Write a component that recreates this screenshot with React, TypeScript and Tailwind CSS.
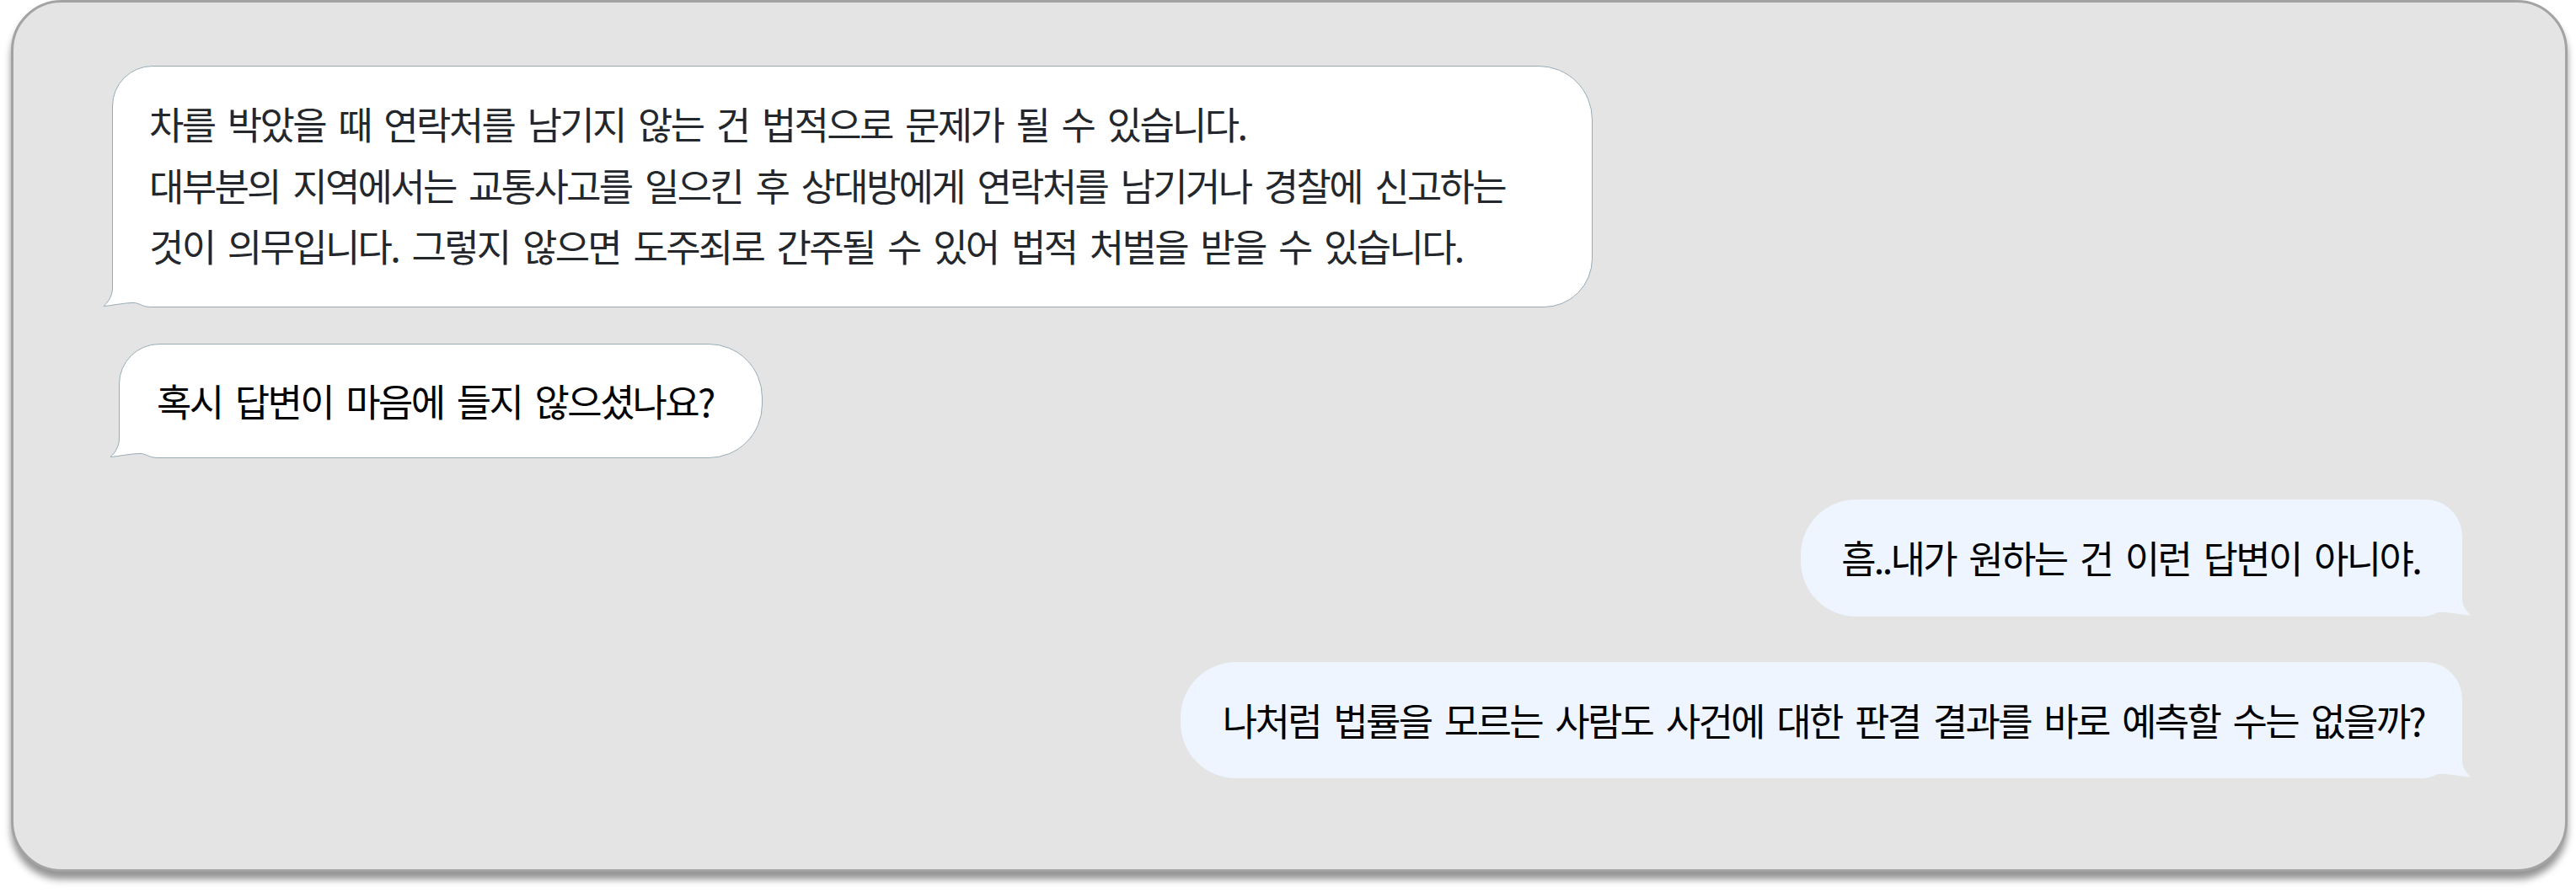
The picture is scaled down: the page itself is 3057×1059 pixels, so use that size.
import React from 'react'

const BG = '#e4e4e4'

function Tail({ side, fill, stroke }: { side: 'left' | 'right'; fill: string; stroke?: string }) {
  const edge = 'M12.5 16 C12.5 26 8 33 2 38.5 C12 37.8 26 34.6 37 34.4 C44 34.4 48 39.5 58 39.5'
  const pos = side === 'left'
    ? stroke ? 'left-[-13px] bottom-[-1px]' : 'left-[-12px] bottom-0'
    : 'right-[-12px] bottom-0 -scale-x-100'
  return (
    <svg className={`absolute ${pos} overflow-visible`} width="72" height="40" viewBox="0 0 72 40">
      <path d={`M2 38.5 C12 37.8 26 34.6 37 34.4 C44 34.4 48 39.5 58 39.5 L58 42 L0 42 L0 38.5 Z`} fill={BG} />
      <path d={`${edge} L72 39.5 L72 16 Z`} fill={fill} />
      {stroke && <path d={`${edge} L72 39.5`} fill="none" stroke={stroke} strokeWidth="1" />}
    </svg>
  )
}

const textStyle = "font-['Noto_Sans_CJK_KR',sans-serif] text-[45px] leading-[72.5px] tracking-[-0.06em] [word-spacing:8px] whitespace-nowrap"

export default function App() {
  return (
    <div className="min-h-screen bg-white">
      <div className="ml-[13px] w-[3034px] h-[1035px] rounded-[60px] border-[3px] border-[#a3a3a3] bg-[#e4e4e4] shadow-[0_9px_9px_rgba(0,0,0,0.42)] flex flex-col pl-[117px] pr-[122px] pt-[75px]">
        {/* bot answer */}
        <div className={`relative self-start w-[1757px] bg-white border border-[#98abb5] rounded-tl-[48px] rounded-tr-[64px] rounded-br-[58px] rounded-bl-none pl-[43px] pt-[32px] pb-[35px] text-[#24272b] ${textStyle}`}>
          <p>차를 박았을 때 연락처를 남기지 않는 건 법적으로 문제가 될 수 있습니다.</p>
          <p>대부분의 지역에서는 교통사고를 일으킨 후 상대방에게 연락처를 남기거나 경찰에 신고하는</p>
          <p>것이 의무입니다. 그렇지 않으면 도주죄로 간주될 수 있어 법적 처벌을 받을 수 있습니다.</p>
          <Tail side="left" fill="#ffffff" stroke="#98abb5" />
        </div>

        <div className={`relative self-start ml-[8px] mt-[43px] bg-white border border-[#98abb5] rounded-tl-[48px] rounded-r-[64px] rounded-bl-none pl-[44px] pr-[57px] py-[31px] text-black ${textStyle}`}>
          <p>혹시 답변이 마음에 들지 않으셨나요?</p>
          <Tail side="left" fill="#ffffff" stroke="#98abb5" />
        </div>

        {/* user messages */}
        <div className={`relative self-end mt-[49px] bg-[#eef5fe] rounded-l-[66px] rounded-tr-[44px] rounded-br-none pl-[48px] pr-[50px] py-[33px] text-black ${textStyle}`}>
          <p>흠..내가 원하는 건 이런 답변이 아니야.</p>
          <Tail side="right" fill="#eef5fe" />
        </div>

        <div className={`relative self-end mt-[54px] bg-[#eef5fe] rounded-l-[66px] rounded-tr-[44px] rounded-br-none pl-[50px] pr-[45px] py-[33px] text-black ${textStyle}`}>
          <p>나처럼 법률을 모르는 사람도 사건에 대한 판결 결과를 바로 예측할 수는 없을까?</p>
          <Tail side="right" fill="#eef5fe" />
        </div>
      </div>
    </div>
  )
}
